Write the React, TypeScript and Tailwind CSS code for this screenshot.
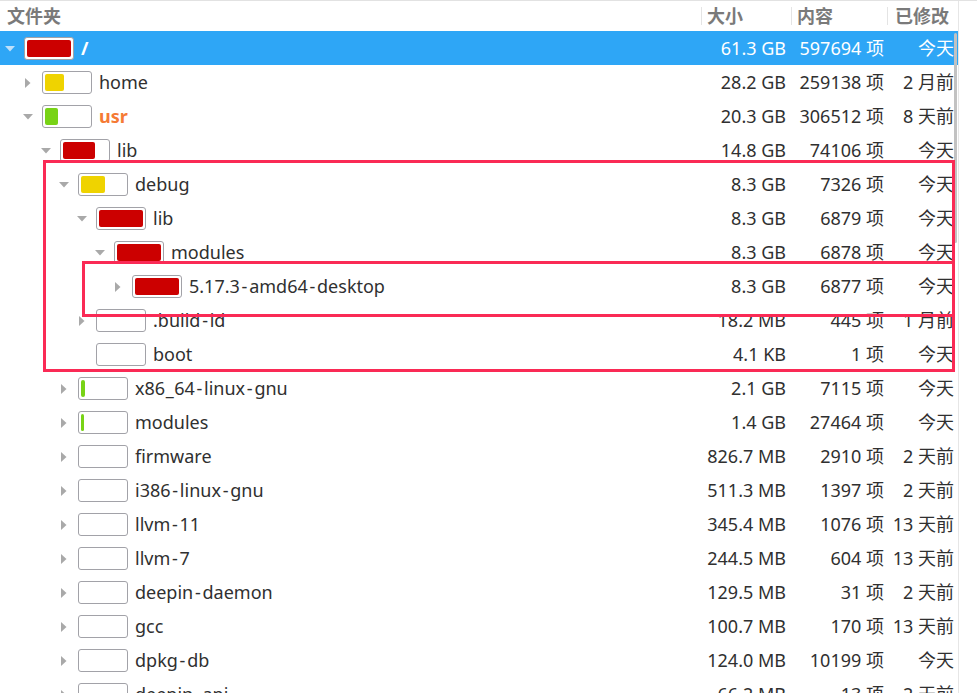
import React from "react";

type Row = {
  name: string;
  level: number;
  arrow: "down" | "right" | "none";
  fill?: string;
  fillW?: number;
  size: string;
  count: string;
  mod: string;
  selected?: boolean;
  accent?: boolean;
};

const RED = "#cc0000";
const YEL = "#efd300";
const GRN = "#78d316";

const rows: Row[] = [
  { name: "/", level: 0, arrow: "down", fill: RED, fillW: 44, size: "61.3 GB", count: "597694 项", mod: "今天", selected: true },
  { name: "home", level: 1, arrow: "right", fill: YEL, fillW: 19, size: "28.2 GB", count: "259138 项", mod: "2 月前" },
  { name: "usr", level: 1, arrow: "down", fill: GRN, fillW: 13, size: "20.3 GB", count: "306512 项", mod: "8 天前", accent: true },
  { name: "lib", level: 2, arrow: "down", fill: RED, fillW: 32, size: "14.8 GB", count: "74106 项", mod: "今天" },
  { name: "debug", level: 3, arrow: "down", fill: YEL, fillW: 24, size: "8.3 GB", count: "7326 项", mod: "今天" },
  { name: "lib", level: 4, arrow: "down", fill: RED, fillW: 44, size: "8.3 GB", count: "6879 项", mod: "今天" },
  { name: "modules", level: 5, arrow: "down", fill: RED, fillW: 44, size: "8.3 GB", count: "6878 项", mod: "今天" },
  { name: "5.17.3-amd64-desktop", level: 6, arrow: "right", fill: RED, fillW: 44, size: "8.3 GB", count: "6877 项", mod: "今天" },
  { name: ".build-id", level: 4, arrow: "right", size: "18.2 MB", count: "445 项", mod: "1 月前" },
  { name: "boot", level: 4, arrow: "none", size: "4.1 KB", count: "1 项", mod: "今天" },
  { name: "x86_64-linux-gnu", level: 3, arrow: "right", fill: GRN, fillW: 4, size: "2.1 GB", count: "7115 项", mod: "今天" },
  { name: "modules", level: 3, arrow: "right", fill: GRN, fillW: 3, size: "1.4 GB", count: "27464 项", mod: "今天" },
  { name: "firmware", level: 3, arrow: "right", size: "826.7 MB", count: "2910 项", mod: "2 天前" },
  { name: "i386-linux-gnu", level: 3, arrow: "right", size: "511.3 MB", count: "1397 项", mod: "2 天前" },
  { name: "llvm-11", level: 3, arrow: "right", size: "345.4 MB", count: "1076 项", mod: "13 天前" },
  { name: "llvm-7", level: 3, arrow: "right", size: "244.5 MB", count: "604 项", mod: "13 天前" },
  { name: "deepin-daemon", level: 3, arrow: "right", size: "129.5 MB", count: "31 项", mod: "2 天前" },
  { name: "gcc", level: 3, arrow: "right", size: "100.7 MB", count: "170 项", mod: "13 天前" },
  { name: "dpkg-db", level: 3, arrow: "right", size: "124.0 MB", count: "10199 项", mod: "今天" },
  { name: "deepin-api", level: 3, arrow: "right", size: "66.2 MB", count: "13 项", mod: "2 天前" },
];

function Arrow({ dir, selected }: { dir: Row["arrow"]; selected?: boolean }) {
  const color = selected ? "#bfe0fa" : "#a9a9a9";
  if (dir === "down")
    return (
      <svg width="10" height="6" viewBox="0 0 10 6">
        <polygon points="0,0 10,0 5,5.5" fill={color} />
      </svg>
    );
  if (dir === "right")
    return (
      <svg width="6" height="10" viewBox="0 0 6 10">
        <polygon points="0,0 5.5,5 0,10" fill={color} />
      </svg>
    );
  return null;
}

function Name({ text }: { text: string }) {
  const parts = text.split(/([-_])/);
  return (
    <>
      {parts.map((p, i) =>
        p === "-" ? (
          <span key={i} className="px-[1.75px]">-</span>
        ) : p === "_" ? (
          <span key={i} className="px-[0.5px]">_</span>
        ) : (
          <React.Fragment key={i}>{p}</React.Fragment>
        )
      )}
    </>
  );
}

function TreeRow({ r }: { r: Row }) {
  return (
    <div
      className={
        "flex h-[34px] items-center " +
        (r.selected ? "bg-[#2ea6f6] text-white" : "text-[#303030]")
      }
    >
      <div className="flex w-[701px] min-w-0 items-center" style={{ paddingLeft: r.level * 18 }}>
        <div className="flex w-[24px] items-center justify-center pr-[4px] pt-[1px]">
          <Arrow dir={r.arrow} selected={r.selected} />
        </div>
        <div className="h-[23px] w-[50px] shrink-0 rounded-[3px] border border-[#a2a2a8] bg-white p-[2px]">
          {r.fill && (
            <div
              className="h-full rounded-[2px]"
              style={{ width: r.fillW, backgroundColor: r.fill }}
            />
          )}
        </div>
        <span
          className={
            "ml-[7px] whitespace-nowrap " +
            (r.selected ? "font-bold text-white" : r.accent ? "font-bold text-[#f57a35]" : "")
          }
        >
          <Name text={r.name} />
        </span>
      </div>
      <div className="w-[90px] pr-[5px] text-right whitespace-nowrap">{r.size}</div>
      <div className="w-[96px] pr-[3px] text-right whitespace-nowrap">{r.count}</div>
      <div className="w-[71px] pr-[4px] text-right whitespace-nowrap">{r.mod}</div>
    </div>
  );
}

export default function App() {
  return (
    <div className="relative h-[693px] w-[977px] overflow-hidden border-t border-[#e2e2e2] bg-white font-['Noto_Sans','Noto_Sans_CJK_SC',sans-serif] text-[18px] leading-none">
      <div className="flex">
        <div className="relative w-[959px] border-r border-[#e6e6e6]">
          <div className="flex h-[30px] items-center text-[18px] font-bold text-[#7a7a7a]">
            <div className="w-[701px] pl-[7px]">文件夹</div>
            <div className="flex w-[90px] items-center">
              <div className="h-[18px] w-px bg-[#e4e4e4]" />
              <span className="pl-[5px]">大小</span>
            </div>
            <div className="flex w-[96px] items-center">
              <div className="h-[18px] w-px bg-[#e4e4e4]" />
              <span className="pl-[5px]">内容</span>
            </div>
            <div className="flex w-[71px] items-center">
              <div className="h-[18px] w-px bg-[#e4e4e4]" />
              <span className="pl-[7px]">已修改</span>
            </div>
          </div>
          <div className="flex flex-col">
            {rows.map((r, i) => (
              <TreeRow key={i} r={r} />
            ))}
          </div>
          <div className="absolute left-[954px] top-[32px] h-[210px] w-[3px] rounded-full bg-[#c2c2c2]" />
        </div>
      </div>
      <div className="pointer-events-none absolute left-[43px] top-[159px] h-[212px] w-[912px] border-[3px] border-[#fa2a55]" />
      <div className="pointer-events-none absolute left-[82px] top-[260px] h-[56px] w-[873px] border-[3px] border-[#fa2a55]" />
    </div>
  );
}
